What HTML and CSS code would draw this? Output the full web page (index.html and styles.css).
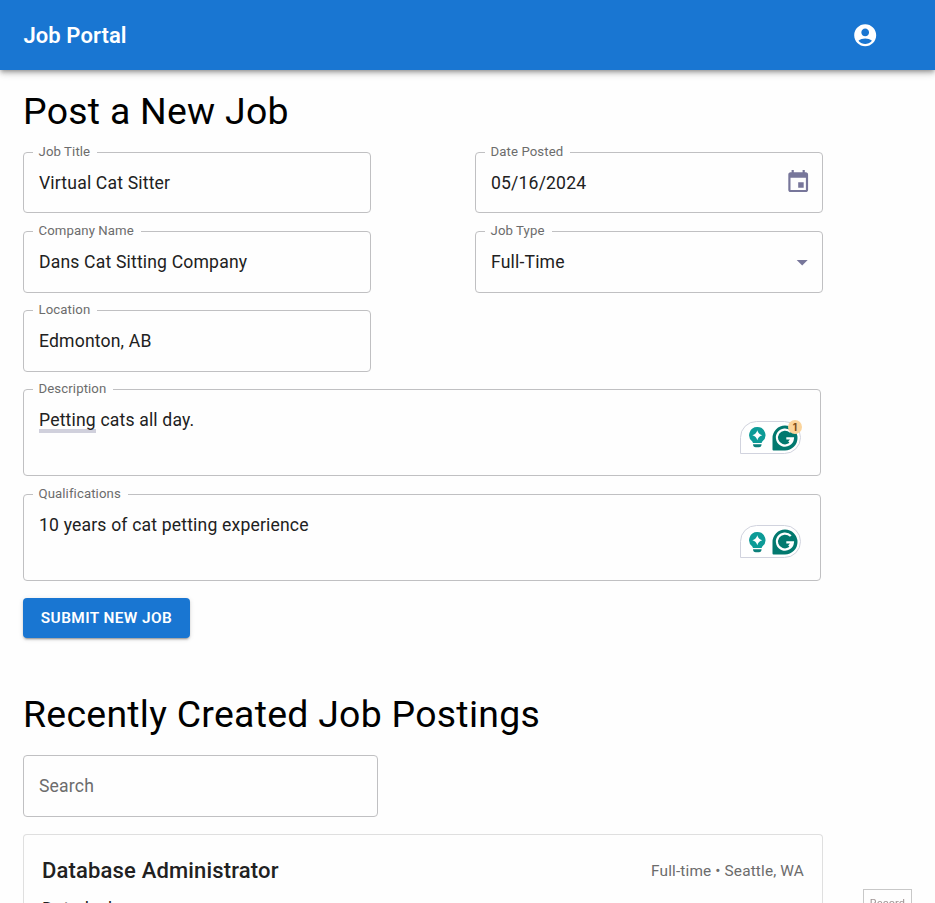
FILE: index.html
```html
<!DOCTYPE html>
<html lang="en">
<head>
<meta charset="utf-8">
<title>Job Portal</title>
<link rel="stylesheet" href="styles.css">
</head>
<body>
<svg class="defs" width="0" height="0" aria-hidden="true">
  <symbol id="bulb" viewBox="0 0 17 21">
    <path fill="#0d9b97" d="M8.3 0a8.1 8.1 0 0 0-5 14.5L4 16h8.6l.7-1.5A8.1 8.1 0 0 0 8.3 0Z"/>
    <path fill="#fff" d="M8.3 3.2Q9.300 7.200 13.200 8.200Q9.300 9.200 8.300 13.200Q7.300 9.200 3.400 8.200Q7.300 7.200 8.300 3.200Z"/>
    <path fill="#0d807b" d="M4 17.300h8.600q-.1 2.900-2.700 2.900H6.700Q4.100 20.200 4 17.300Z"/>
  </symbol>
  <symbol id="g-mark" viewBox="0 0 26 26">
    <path fill="#02796f" d="M13 .5A12.500 12.500 0 1 1 13 25.500H1.500a1 1 0 0 1-1-1V13A12.500 12.500 0 0 1 13 .5Z"/>
    <path fill="none" stroke="#fff" stroke-width="2.200" d="M18.800 7.100A8 8 0 1 0 20.900 13.300H14.300M20.500 13.300L17 17.200"/>
  </symbol>
</svg>
<header class="appbar">
  <span class="brand">Job Portal</span>
  <svg class="account" viewBox="0 0 24 24"><path fill="#fff" d="M12 2C6.480 2 2 6.480 2 12s4.480 10 10 10 10-4.480 10-10S17.520 2 12 2zm0 4c1.930 0 3.500 1.570 3.500 3.500S13.930 13 12 13s-3.500-1.570-3.500-3.500S10.070 6 12 6zm0 14c-2.030 0-4.430-.82-6.140-2.880C7.550 15.800 9.680 15 12 15s4.450.8 6.140 2.120C16.430 19.180 14.030 20 12 20z"/></svg>
</header>
<main class="page">
  <h1 class="heading">Post a New Job</h1>
  <form class="form">
    <div class="columns">
      <div class="column">
        <fieldset class="field short"><legend>Job Title</legend><div class="value">Virtual Cat Sitter</div></fieldset>
        <fieldset class="field"><legend>Company Name</legend><div class="value">Dans Cat Sitting Company</div></fieldset>
        <fieldset class="field"><legend>Location</legend><div class="value">Edmonton, AB</div></fieldset>
      </div>
      <div class="column">
        <fieldset class="field short"><legend>Date Posted</legend><div class="value">05/16/2024<svg class="calendar" viewBox="0 0 24 24"><path fill="#77769a" d="M17 12h-5v5h5v-5zM16 1v2H8V1H6v2H5c-1.110 0-1.990.9-1.990 2L3 19c0 1.100.89 2 2 2h14c1.100 0 2-.9 2-2V5c0-1.100-.9-2-2-2h-1V1h-2zm3 18H5V8h14v11z"/></svg></div></fieldset>
        <fieldset class="field"><legend>Job Type</legend><div class="value">Full-Time<svg class="caret" viewBox="0 0 24 24"><path fill="#77769a" d="M7 10l5 5 5-5z"/></svg></div></fieldset>
      </div>
    </div>
    <fieldset class="field area"><legend>Description</legend><div class="value"><span><span class="suggest">Petting</span> cats all day.</span>
      <div class="assistant"><svg class="bulb"><use href="#bulb"/></svg><svg class="g-mark"><use href="#g-mark"/></svg><span class="badge">1</span></div></div></fieldset>
    <fieldset class="field area"><legend>Qualifications</legend><div class="value">10 years of cat petting experience
      <div class="assistant low"><svg class="bulb"><use href="#bulb"/></svg><svg class="g-mark"><use href="#g-mark"/></svg></div></div></fieldset>
    <button class="submit" type="button">SUBMIT NEW JOB</button>
  </form>
  <h2 class="heading">Recently Created Job Postings</h2>
  <div class="search">Search</div>
  <article class="card">
    <div class="card-head"><h3>Database Administrator</h3><span class="meta">Full-time • Seattle, WA</span></div>
    <p class="company">Datadesk</p>
  </article>
</main>
<div class="record">Record</div>
</body>
</html>
```
FILE: styles.css
```css
* { box-sizing: border-box; }
html, body { height: 903px; overflow: hidden; }
body { margin: 0; background: #fefefe; color: #212121; font-family: Roboto, "Liberation Sans", sans-serif; font-size: 17.6px; letter-spacing: 0.165px; }
.defs { position: absolute; }
.appbar { height: 70px; padding: 0 57px 0 23.5px; display: flex; align-items: center; justify-content: space-between; background: #1976d2; box-shadow: 0 2px 4px -1px rgba(0,0,0,.3), 0 4px 5px rgba(0,0,0,.14), 0 1px 11px rgba(0,0,0,.12); }
.brand { color: #fff; font-size: 22px; font-weight: 600; letter-spacing: 0.08px; }
.account { width: 26.4px; height: 26.4px; }
.page { width: 823px; padding-left: 23px; }
.heading { margin: 0; font-size: 37.4px; line-height: 46px; font-weight: 400; letter-spacing: 0.28px; color: #000; }
h1.heading { padding-top: 18px; }
h2.heading { margin-top: 53px; }
.form { display: flex; flex-direction: column; margin-top: 10px; }
.columns { display: grid; grid-template-columns: 348px 348px; column-gap: 104px; }
.column { display: flex; flex-direction: column; }
.field { margin: 0 0 9px; padding: 0 15px; min-width: 0; height: 70px; border: 1px solid #c0c0c2; border-radius: 4px; }
.field.short { height: 69px; margin-bottom: 10px; }
.field legend { margin-left: -6px; padding: 0 7px 0 5.5px; height: 17px; line-height: 15px; font-size: 13.2px; letter-spacing: .1px; color: #6c6c6c; }
.field .value { position: relative; height: 26px; margin-top: 9px; line-height: 26px; }
.field.area { width: 798px; height: 95px; margin-bottom: 10px; }
.calendar { position: absolute; width: 26.4px; height: 26.4px; right: -4px; top: -1px; }
.caret { position: absolute; width: 26.4px; height: 26.4px; right: -8px; top: 0; }
.suggest { padding-bottom: 3px; box-shadow: 0 -4px 0 #d0d0dc inset; }
.assistant { position: absolute; right: 4px; top: 14px; width: 61px; height: 33px; border: 1px solid #d1d3de; border-radius: 17px 17px 17px 0; background: #fff; }
.assistant.low { top: 13px; }
.assistant .bulb { position: absolute; left: 8px; top: 5px; width: 17px; height: 21px; }
.assistant.low .bulb { top: 6px; }
.assistant .g-mark { position: absolute; left: 31px; top: 3px; width: 26px; height: 26px; }
.badge { position: absolute; left: 47px; top: -2px; width: 14px; height: 14px; border-radius: 50%; background: #fbd49b; color: #7d4b16; font: 700 10px/14px Inter, sans-serif; text-align: center; }
.submit { align-self: flex-start; width: 167px; height: 40px; margin-top: 7px; padding: 0; border: 0; border-radius: 4px; background: #1976d2; color: #fff; font: 600 15.4px Roboto, sans-serif; letter-spacing: .4px; box-shadow: 0 3px 1px -2px rgba(0,0,0,.2), 0 2px 2px rgba(0,0,0,.14), 0 1px 5px rgba(0,0,0,.12); }
.search { width: 355px; height: 62px; margin-top: 18px; padding: 0 15px; line-height: 60px; border: 1px solid #c0c0c2; border-radius: 4px; color: #6c6c6c; }
.card { height: 69px; margin-top: 17px; padding: 18px 18px 0; border: 1px solid #dfdfdf; border-bottom: 0; border-radius: 4px 4px 0 0; overflow: hidden; }
.card-head { display: flex; align-items: center; justify-content: space-between; height: 35px; }
.card-head h3 { margin: 0; font-size: 22px; font-weight: 500; }
.meta { font-size: 15.4px; color: #6c6c6c; letter-spacing: .14px; }
.company { margin: 0; font-size: 17.6px; line-height: 42px; }
.record { position: fixed; left: 863px; top: 889px; width: 49px; height: 26px; border: 1px solid #c8c8c8; color: #a09595; font-size: 11px; line-height: 28px; text-align: center; }
```
